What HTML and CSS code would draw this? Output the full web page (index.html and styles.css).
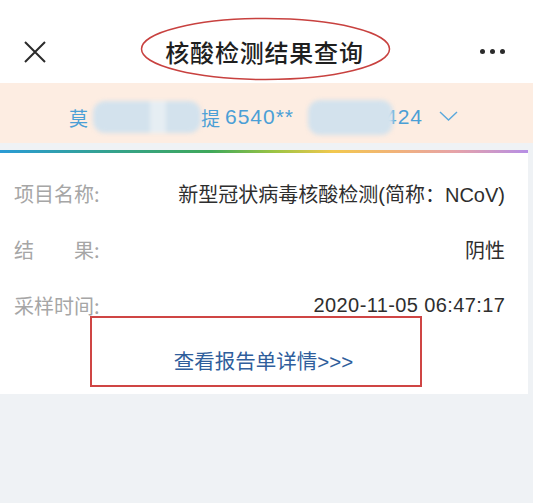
FILE: index.html
```html
<!DOCTYPE html>
<html lang="zh-CN">
<head>
<meta charset="utf-8">
<title>核酸检测结果查询</title>
<link rel="stylesheet" href="styles.css">
</head>
<body>
<div class="page">
  <header class="nav">
    <div class="nav-left">
      <svg class="close" width="22" height="22" viewBox="0 0 22 22"><path d="M1 1 L21 21 M21 1 L1 21" stroke="#2b2b2b" stroke-width="2" fill="none"/></svg>
    </div>
    <h1 class="title">核酸检测结果查询</h1>
    <div class="nav-right">
      <span class="dot"></span><span class="dot"></span><span class="dot"></span>
    </div>
    <svg class="mark-ellipse" width="251" height="64" viewBox="0 0 251 64"><ellipse cx="125.5" cy="32" rx="124" ry="30.5" fill="none" stroke="#c8413f" stroke-width="1.5"/></svg>
  </header>

  <div class="person">
    <span class="cn">莫</span>
    <span class="blur b1"><span class="blur-light"></span></span>
    <span class="cn">提</span>
    <span class="id">6540**</span>
    <span class="blur b2"></span>
    <span class="id tail">424</span>
    <svg class="chev" width="19" height="10" viewBox="0 0 19 10"><polyline points="1,1 9.5,9 18,1" fill="none" stroke="#5aa8dc" stroke-width="1.4"/></svg>
  </div>

  <section class="card">
    <div class="row">
      <span class="label">项目名称:</span>
      <span class="value">新型冠状病毒核酸检测(简称：NCoV)</span>
    </div>
    <div class="row">
      <span class="label">结　　果:</span>
      <span class="value">阴性</span>
    </div>
    <div class="row">
      <span class="label">采样时间:</span>
      <span class="value time">2020-11-05 06:47:17</span>
    </div>
    <div class="link">查看报告单详情&gt;&gt;&gt;</div>
    <div class="mark-box"></div>
  </section>
</div>
</body>
</html>
```

FILE: styles.css
```css
* { box-sizing: border-box; }

html, body {
  margin: 0;
  padding: 0;
}

body {
  background: #eff2f5;
  font-family: "Liberation Sans", "Noto Sans CJK SC", sans-serif;
  width: 533px;
  height: 503px;
  overflow: hidden;
}

.page {
  display: flex;
  flex-direction: column;
}

.nav {
  position: relative;
  height: 83px;
  background: #fff;
  padding-top: 20px;
  display: grid;
  grid-template-columns: 1fr auto 1fr;
  align-items: center;
}

.nav-left {
  padding-left: 24px;
  display: flex;
  align-items: center;
}

.close { display: block; }

.title {
  margin: 0;
  font-family: "Noto Sans CJK SC", sans-serif;
  font-size: 24px;
  font-weight: 500;
  color: #1f1f1f;
  letter-spacing: 0.8px;
  line-height: 1;
  padding-right: 4px;
}

.nav-right {
  display: flex;
  justify-content: flex-end;
  gap: 5px;
  padding-right: 28px;
}

.dot {
  width: 5px;
  height: 5px;
  border-radius: 50%;
  background: #2b2b2b;
}

.mark-ellipse {
  position: absolute;
  left: 140px;
  top: 17px;
}

.person {
  height: 60px;
  background: #fdede2;
  display: flex;
  align-items: center;
  justify-content: center;
  padding-top: 8px;
  padding-right: 6px;
  color: #4b9fd6;
  font-size: 19px;
}

.cn {
  font-family: "Noto Sans CJK SC", sans-serif;
}

.blur {
  display: inline-block;
  position: relative;
  z-index: 1;
  height: 32px;
  border-radius: 12px;
  background: #d3e2ed;
  filter: blur(2px);
}

.b1 {
  width: 108px;
  margin: 0 0 0 5px;
}

.blur-light {
  position: absolute;
  left: 57px;
  top: 0;
  width: 16px;
  height: 32px;
  background: #e6eef3;
}

.b2 {
  width: 85px;
  height: 35px;
  margin-left: 14px;
  margin-right: -8px;
}

.id {
  margin-left: 5px;
  font-size: 21px;
  letter-spacing: 1px;
}

.tail {
  margin-left: 0;
}

.chev {
  margin-left: 16px;
  margin-top: -2px;
}

.card {
  position: relative;
  margin-top: 7px;
  width: 528px;
  background: #fff;
  border-top: 3px solid transparent;
  border-image: linear-gradient(90deg, #2a9bd6 0%, #34a28a 22%, #3fa85a 40%, #9cc444 52%, #f2c84e 63%, #f1b27a 75%, #e6a3a8 86%, #b58ee6 100%) 1;
  padding: 12px 23px 7px 14px;
}

.row {
  height: 56px;
  display: flex;
  align-items: center;
  justify-content: space-between;
  font-size: 20px;
}

.label {
  color: #a6a6a6;
  font-family: "Noto Sans CJK SC", sans-serif;
}

.value {
  color: #2e2e2e;
}

.time {
  letter-spacing: 0.4px;
  margin-right: -0.4px;
}

.link {
  height: 54px;
  display: flex;
  align-items: center;
  justify-content: center;
  color: #2f5e9c;
  font-size: 20.5px;
  padding-left: 8px;
}

.mark-box {
  position: absolute;
  left: 90px;
  top: 163px;
  width: 332px;
  height: 71px;
  border: 2px solid #cf4544;
}
```
